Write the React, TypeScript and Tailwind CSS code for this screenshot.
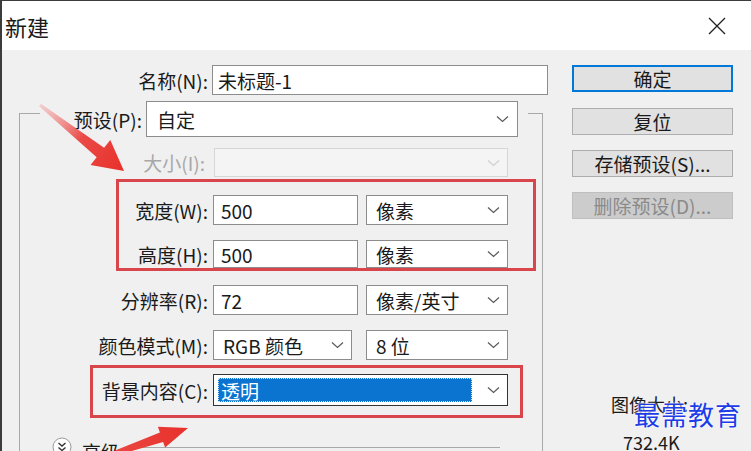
import React from 'react';

function Chevron({ light }: { light?: boolean }) {
    return (
        <svg width="13" height="8" viewBox="0 0 13 8" className="shrink-0">
            <path d="M1 1.5 L6.5 6.5 L12 1.5" fill="none" stroke={light ? '#cfcfcf' : '#5a5a5a'} strokeWidth="1.2" />
        </svg>
    );
}

function Select({ text, className }: { text: string; className: string }) {
    return (
        <div className={`flex items-center justify-between bg-white border border-[#8c8c8c] pl-[9px] pr-[7px] shrink-0 ${className}`}>
            <span>{text}</span>
            <Chevron />
        </div>
    );
}

function Input({ text, className }: { text: string; className: string }) {
    return (
        <div className={`flex items-center bg-white border border-[#8c8c8c] pl-[7px] shrink-0 ${className}`}>
            {text}
        </div>
    );
}

function Button({ label, primary, disabled }: { label: string; primary?: boolean; disabled?: boolean }) {
    const look = primary
        ? 'border-2 border-[#0078d7] bg-[#e1e1e1] text-[#1a1a1a]'
        : disabled
            ? 'border border-[#bfbfbf] bg-[#cccccc] text-[#8a8a8a]'
            : 'border border-[#adadad] bg-[#e1e1e1] text-[#1a1a1a]';
    return (
        <div className={`h-[27px] w-[161px] flex items-center justify-center ${look}`}>
            {label}
        </div>
    );
}

export default function App() {
    return (
        <div className="relative w-[751px] h-[451px] overflow-hidden bg-[#f0f0f0] border-l-2 border-t border-[#3c3c3c] font-['Noto_Sans_CJK_SC',sans-serif] text-[19px] leading-none text-[#1a1a1a]">
            {/* Title bar */}
            <div className="h-[49px] bg-white flex items-center justify-between pl-[3px] pr-[25px]">
                <span className="text-[22px]">新建</span>
                <svg width="18" height="18" viewBox="0 0 18 18">
                    <path d="M1 1 L17 17 M17 1 L1 17" stroke="#222" strokeWidth="1.3" />
                </svg>
            </div>

            <div className="flex">
                {/* Left form column */}
                <div className="w-[570px] shrink-0">
                    {/* Name */}
                    <div className="flex items-center mt-[15px]">
                        <span className="w-[206px] text-right shrink-0">名称(N):</span>
                        <div className="ml-[4px] w-[336px] h-[30px] flex items-center bg-white border border-[#8c8c8c] pl-[5px]">未标题-1</div>
                    </div>

                    {/* Preset group box */}
                    <div className="mt-[18px] ml-[17px] w-[524px] h-[400px] border-l border-r border-t border-[#a8a8a8]">
                        <div className="-mt-[13px] ml-[20px] w-[488px] bg-[#f0f0f0] flex items-center">
                            <span className="w-[102px] text-right shrink-0">预设(P):</span>
                            <div className="ml-[4px] w-[372px] h-[36px] flex items-center justify-between bg-white border border-[#8c8c8c] pl-[10px] pr-[8px]">
                                <span>自定</span>
                                <Chevron />
                            </div>
                        </div>

                        {/* Size (disabled) */}
                        <div className="flex items-center mt-[11px]">
                            <span className="w-[185px] text-right shrink-0 text-[#a8a8a8]">大小(I):</span>
                            <div className="ml-[9px] w-[294px] h-[29px] flex items-center justify-end bg-[#f4f4f4] border border-[#d6d6d6] pr-[7px]">
                                <Chevron light />
                            </div>
                        </div>

                        {/* Width / height highlight */}
                        <div className="mt-[2px] ml-[96px] w-[420px] border-[3px] border-[#d8464b] pt-[13px]">
                            <div className="flex items-center">
                                <span className="w-[89px] text-right shrink-0">宽度(W):</span>
                                <Input text="500" className="ml-[5px] w-[145px] h-[30px]" />
                                <Select text="像素" className="ml-[8px] w-[142px] h-[30px]" />
                            </div>
                            <div className="flex items-center mt-[15px]">
                                <span className="w-[89px] text-right shrink-0">高度(H):</span>
                                <Input text="500" className="ml-[5px] w-[145px] h-[28px]" />
                                <Select text="像素" className="ml-[8px] w-[142px] h-[28px]" />
                            </div>
                        </div>

                        {/* Resolution */}
                        <div className="flex items-center mt-[14px]">
                            <span className="w-[188px] text-right shrink-0">分辨率(R):</span>
                            <Input text="72" className="ml-[5px] w-[145px] h-[30px]" />
                            <Select text="像素/英寸" className="ml-[8px] w-[142px] h-[30px]" />
                        </div>

                        {/* Color mode */}
                        <div className="flex items-center mt-[15px]">
                            <span className="w-[188px] text-right shrink-0">颜色模式(M):</span>
                            <Select text="RGB 颜色" className="ml-[5px] w-[139px] h-[30px]" />
                            <Select text="8 位" className="ml-[14px] w-[142px] h-[30px]" />
                        </div>

                        {/* Background contents highlight */}
                        <div className="mt-[5px] ml-[70px] w-[433px] border-[3px] border-[#d8464b] pt-[6px] pb-[9px]">
                            <div className="flex items-center">
                                <span className="w-[115px] text-right shrink-0">背景内容(C):</span>
                                <div className="ml-[5px] w-[295px] h-[32px] flex items-center justify-between bg-white border border-[#333333] pl-[4px] pr-[7px]">
                                    <div className="w-[254px] h-[24px] flex items-center bg-[#0a74d0] border border-dotted border-[#cfe3f7] pl-[2px] text-white">透明</div>
                                    <Chevron />
                                </div>
                            </div>
                        </div>

                        {/* Advanced */}
                        <div className="flex items-center mt-[19px] h-[20px] mr-[42px]">
                            <svg width="20" height="20" viewBox="0 0 20 20" className="ml-[32px] shrink-0">
                                <circle cx="10" cy="10" r="9" fill="#fff" stroke="#9a9a9a" />
                                <path d="M6.5 6 L10 9 L13.5 6 M6.5 10.5 L10 13.5 L13.5 10.5" fill="none" stroke="#333" strokeWidth="1.4" />
                            </svg>
                            <span className="ml-[10px] mt-[8px]">高级</span>
                            <div className="ml-[8px] flex-1 border-t border-[#a8a8a8]" />
                        </div>
                    </div>
                </div>

                {/* Right button column */}
                <div className="w-[161px] shrink-0 pt-[15px] flex flex-col">
                    <Button label="确定" primary />
                    <div className="mt-[16px]"><Button label="复位" /></div>
                    <div className="mt-[15px]"><Button label="存储预设(S)..." /></div>
                    <div className="mt-[15px]"><Button label="删除预设(D)..." disabled /></div>
                    <div className="mt-[176px] pl-[39px] text-[18px]">图像大小:</div>
                    <div className="mt-[20px] pl-[51px] text-[18px]">732.4K</div>
                </div>
            </div>

            {/* Watermark */}
            <div className="absolute left-[632px] top-[400px] text-[26px] tracking-[1px] text-[#1d3ce6] [text-shadow:0_0_2px_#fff,0_0_2px_#fff]">最需教育</div>

            {/* Red annotation arrows */}
            <svg className="absolute left-0 top-0 pointer-events-none" width="751" height="451" viewBox="0 0 751 451">
                <defs>
                    <linearGradient id="a1" x1="38" y1="104" x2="122" y2="170" gradientUnits="userSpaceOnUse">
                        <stop offset="0" stopColor="#f39a9a" stopOpacity="0.4" />
                        <stop offset="0.5" stopColor="#ea4a46" />
                        <stop offset="1" stopColor="#e8302a" />
                    </linearGradient>
                    <linearGradient id="a2" x1="105" y1="455" x2="186" y2="427" gradientUnits="userSpaceOnUse">
                        <stop offset="0" stopColor="#ea4a46" />
                        <stop offset="1" stopColor="#e8302a" />
                    </linearGradient>
                </defs>
                <polygon
                    points="38.9,102.8 102.1,146.8 108.3,138.9 122,170 88.5,164.1 94.7,156.2 37.1,105.2"
                    fill="url(#a1)"
                />
                <polygon
                    points="105.7,457 161.1,440.9 163.1,446.6 186,427 155.9,425.8 157.9,431.5 104.3,453"
                    fill="url(#a2)"
                />
            </svg>
        </div>
    );
}
